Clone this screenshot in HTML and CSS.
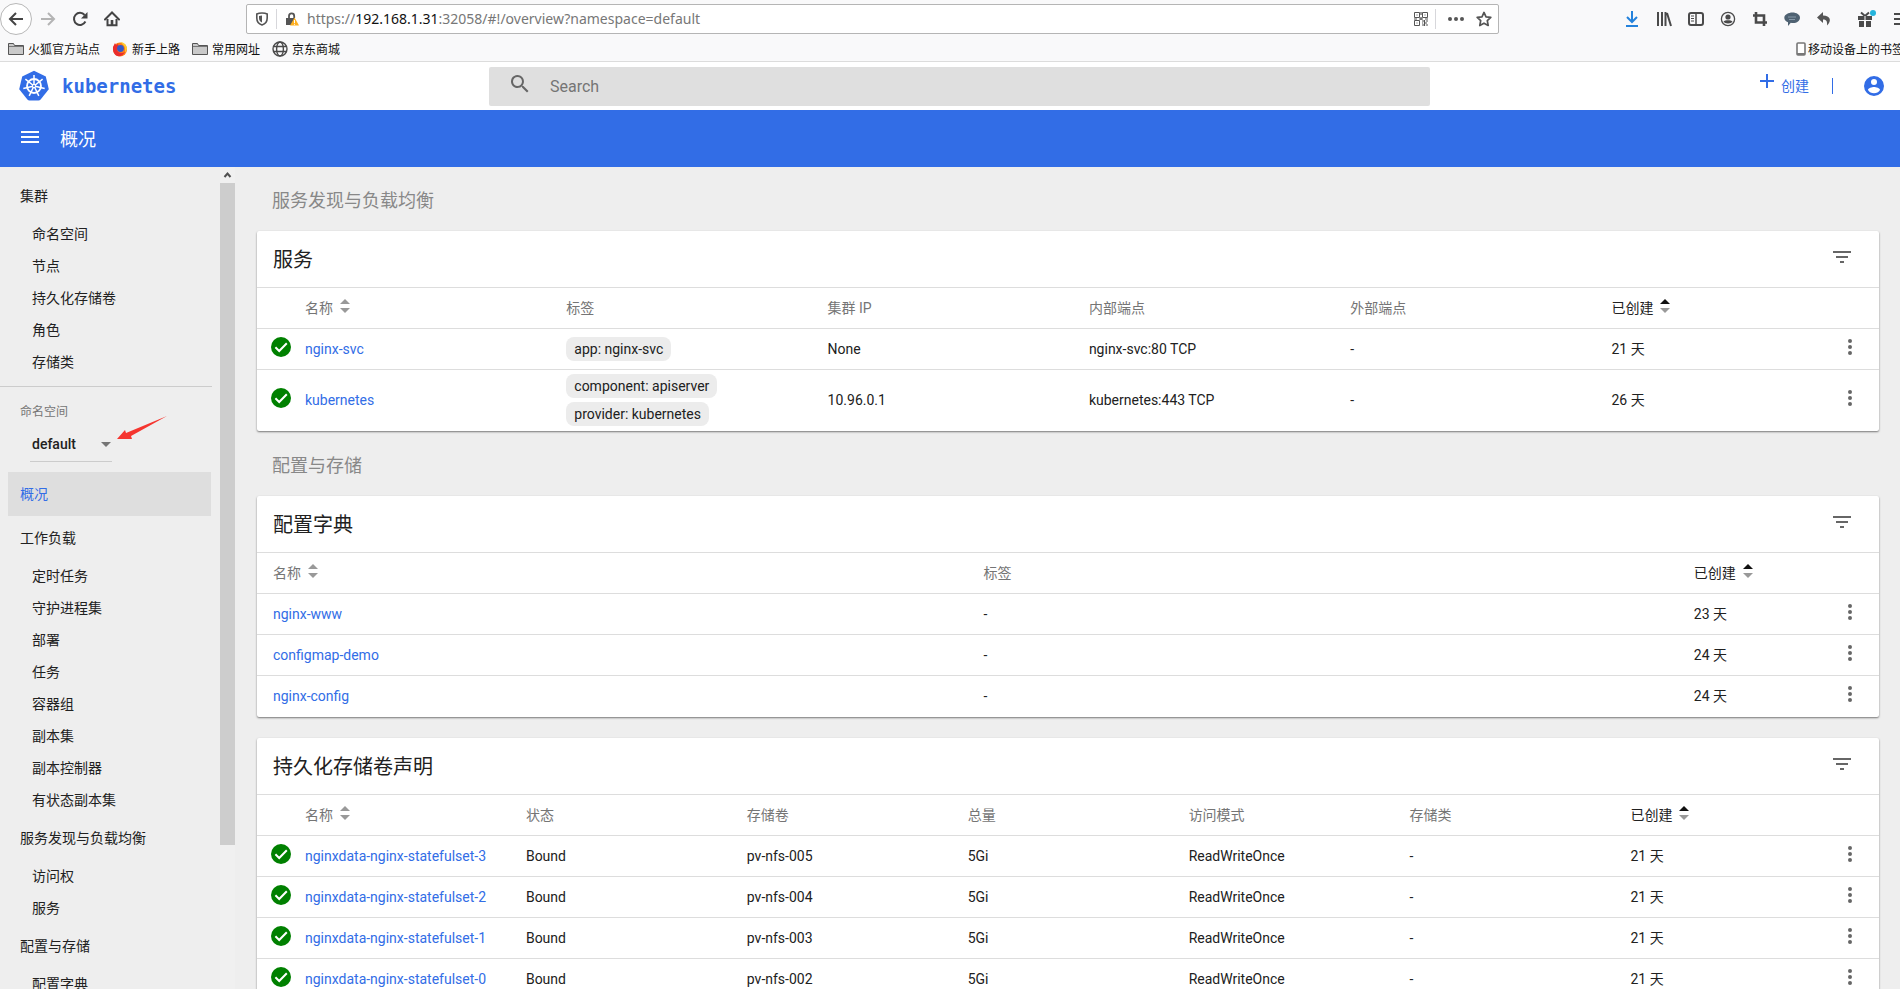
FILE: index.html
```
<!DOCTYPE html>
<html lang="zh-CN">
<head>
<meta charset="utf-8">
<title>概况 - Kubernetes Dashboard</title>
<link rel="stylesheet" href="styles.css">
</head>
<body>
<svg class="defs" aria-hidden="true">
  <symbol id="folder" viewBox="0 0 16 16"><path d="M.5 2.5h5l1 2h9v9H.5z" fill="#c9c9c9" stroke="#555"/><path d="M1 5.5h14" stroke="#777"/></symbol>
  <symbol id="check" viewBox="0 0 24 24"><circle cx="12" cy="12" r="10" fill="#008000"/><path d="M6.4 12.2l3.8 3.8 7.6-7.8" fill="none" stroke="#fff" stroke-width="2"/></symbol>
  <symbol id="more" viewBox="0 0 24 24"><path d="M12 8a2 2 0 1 0 0-4 2 2 0 0 0 0 4zm0 2a2 2 0 1 0 0 4 2 2 0 0 0 0-4zm0 6a2 2 0 1 0 0 4 2 2 0 0 0 0-4z"/></symbol>
  <symbol id="filter" viewBox="0 0 24 24"><path d="M10 18h4v-2h-4zM3 6v2h18V6zm3 7h12v-2H6z"/></symbol>
  <symbol id="sort" viewBox="0 0 10 14"><path d="M0 5l5-5 5 5z" fill="currentColor"/><path d="M0 9h10l-5 5z" fill="#999"/></symbol>
</svg>

<div class="browser">
  <div class="toolbar">
    <button class="tool back" aria-label="后退"><svg width="16" height="16" viewBox="0 0 16 16"><path d="M15 8H2M8 2L2 8l6 6" fill="none" stroke="#444" stroke-width="2"/></svg></button>
    <button class="tool" aria-label="前进"><svg width="16" height="16" viewBox="0 0 16 16"><path d="M1 8h13M8 2l6 6-6 6" fill="none" stroke="#b4b4b4" stroke-width="2"/></svg></button>
    <button class="tool" aria-label="刷新"><svg width="16" height="16" viewBox="0 0 16 16"><path d="M13.4 10.5A6 6 0 1 1 12.6 4" fill="none" stroke="#444" stroke-width="2"/><path d="M15.5 1v6.5H9z" fill="#444"/></svg></button>
    <button class="tool" aria-label="主页"><svg width="16" height="16" viewBox="0 0 16 16"><path d="M1 8.5l7-7 7 7" fill="none" stroke="#444" stroke-width="2" stroke-linecap="round"/><path d="M3.5 8v6.2h9V8" fill="none" stroke="#444" stroke-width="2"/><path d="M6.7 9h2.6v5H6.7z" fill="#444"/></svg></button>
    <div class="address">
      <svg width="14" height="14" viewBox="0 0 14 14"><path d="M7 1c2 0 4 .4 5.2 1v4c0 3.600-2 6-5.200 7C3.800 12 1.800 9.600 1.800 6V2C3 1.400 5 1 7 1z" fill="none" stroke="#555" stroke-width="1.600"/><path d="M7 3.500v7C5 9.500 4 8 4 6V4z" fill="#555"/></svg>
      <i class="rule"></i>
      <svg width="14" height="14" viewBox="0 0 14 14"><path d="M4 6V4a2.600 2.600 0 0 1 5.200 0v2" fill="none" stroke="#555" stroke-width="1.800"/><path d="M1 6h9v7H1z" fill="#555"/><path d="M9.500 5.500L14 13.500H5z" fill="#ffb020"/><path d="M9.500 8v3m0 .8v1" stroke="#fff"/></svg>
      <div class="url">https://<b>192.168.1.31</b>:32058/#!/overview?namespace=default</div>
      <svg width="14" height="14" viewBox="0 0 14 14" fill="none" stroke="#555"><path d="M.5.5h5v5h-5zM8.500.5h5v5h-5zM.5 8.500h5v5h-5z"/><path d="M2.500 3h1m7 0h1m-9 8h1M7 0v3m0 2v3M0 7h3m2 0h4m2 0h3M8 9h2m2 0h2M8 11h1m2 0h2m-5 2h2m2 0h2M10.500 8v6" stroke-width="1.200"/></svg>
      <i class="rule wide"></i>
      <svg class="dots" width="18" height="14" viewBox="0 0 18 14" fill="#555"><circle cx="3" cy="7" r="2"/><circle cx="9" cy="7" r="2"/><circle cx="15" cy="7" r="2"/></svg>
      <svg width="16" height="16" viewBox="0 0 16 16"><path d="M8 1.400l2 4.400 4.800.6-3.500 3.300.9 4.800L8 12.200l-4.200 2.300.9-4.800L1.200 6.400 6 5.800z" fill="none" stroke="#555" stroke-width="1.700" stroke-linejoin="round"/></svg>
    </div>
    <div class="actions">
      <svg width="16" height="16" viewBox="0 0 16 16" fill="none" stroke="#2482dc" stroke-width="2"><path d="M8 0v11M3 6l5 5 5-5M2 15h12"/></svg>
      <svg width="16" height="16" viewBox="0 0 16 16" fill="none" stroke="#4a4a4a" stroke-width="2"><path d="M2 1v14M6 1v14M9.500 1v14M11 2l4 13"/></svg>
      <svg width="16" height="16" viewBox="0 0 16 16" fill="none" stroke="#4a4a4a"><rect x="1" y="2" width="14" height="12" rx="2" stroke-width="2"/><path d="M8 2v12" stroke-width="1.500"/><path d="M3 5h3M3 7.500h3M3 10h3"/></svg>
      <svg width="16" height="16" viewBox="0 0 16 16"><circle cx="8" cy="8" r="6.600" fill="none" stroke="#4a4a4a" stroke-width="1.300"/><circle cx="8" cy="6" r="2.600" fill="#4a4a4a"/><path d="M3.500 10.500C5 8.800 11 8.800 12.500 10.500 11.500 13 4.500 13 3.500 10.500z" fill="#4a4a4a"/></svg>
      <svg width="16" height="16" viewBox="0 0 16 16" fill="none" stroke="#4a4a4a" stroke-width="2.600"><path d="M4 1v10.500h11M1 4.500h11V15"/></svg>
      <svg width="16" height="16" viewBox="0 0 16 16"><path d="M8.500 1.500c4 0 7.500 2.200 7.500 5.200s-3 5.300-7 5.300c-.8 0-1.500 0-2.200-.2L4 15v-3.800C1.800 10.300.3 8.800.3 6.700c0-3 4.200-5.200 8.200-5.200z" fill="#4f6272"/><path d="M4 6h8M5 8.500h6" stroke="#8799a8"/></svg>
      <svg width="16" height="16" viewBox="0 0 16 16"><path d="M7 1L1 6.500 7 12V8.500c3 0 4.500 1.500 4 6C16 10 14.500 4.500 7 4.500z" fill="#555"/></svg>
      <i class="rule tall"></i>
      <svg width="20" height="18" viewBox="0 0 20 18"><path d="M1 6h14v4H1zM2 11h5v6H2zM9 11h5v6H9z" fill="#4a4a4a"/><path d="M8 6L4 2.500M8 6l4-3.500" stroke="#4a4a4a" stroke-width="2"/><path d="M8 6v11" stroke="#f9f9fa"/><circle cx="16" cy="3" r="3" fill="#25b4dc"/></svg>
      <svg width="16" height="16" viewBox="0 0 16 16"><path d="M1 3h14M1 8h14M1 13h14" stroke="#4a4a4a" stroke-width="2"/></svg>
    </div>
  </div>
  <div class="bookmarks">
    <a href="#"><svg width="16" height="16"><use href="#folder"/></svg>火狐官方站点</a>
    <a href="#"><svg width="16" height="16" viewBox="0 0 16 16"><circle cx="8" cy="8.500" r="7" fill="#ff7a18"/><path d="M8 1c4 0 7 3 7 7l-2 4V7C12 4 10 3 8 1z" fill="#ffcb2e"/><path d="M1 6l2-4 1 2 2-1 1 4-2 2c1 3 5 4 8 2-2 4-6 5-9 3.500C2 13 .5 10 1 6z" fill="#ea2d2d"/><circle cx="8.500" cy="7.500" r="3.400" fill="#3359c8"/></svg>新手上路</a>
    <a href="#"><svg width="16" height="16"><use href="#folder"/></svg>常用网址</a>
    <a href="#"><svg width="16" height="16" viewBox="0 0 16 16" fill="none" stroke="#4a4a4a" stroke-width="1.400"><circle cx="8" cy="8" r="7"/><ellipse cx="8" cy="8" rx="3.400" ry="7"/><path d="M1.500 5.500h13M1.500 10.500h13"/></svg>京东商城</a>
    <a class="mobile" href="#"><svg width="10" height="14" viewBox="0 0 10 14"><rect x="1" y="1" width="8" height="12" rx="1" fill="#fff" stroke="#777" stroke-width="1.600"/><path d="M1 12h8" stroke="#777" stroke-width="2"/></svg>移动设备上的书签</a>
  </div>
</div>

<header class="header">
  <a class="brand" href="#">
    <svg width="32" height="32" viewBox="0 0 32 32"><path d="M16 .8l11.800 5.700 3 12.800-8.200 10.200a3 3 0 0 1-2 1h-9.200a3 3 0 0 1-2-1L1.200 19.300l3-12.800z" fill="#326de6"/><g fill="none" stroke="#fff"><circle cx="16" cy="16" r="7" stroke-width="1.800"/><path d="M16 16V5M16 16l8.600-6.900M16 16l10.700 2.500M16 16l4.800 9.900M16 16l-4.800 9.900M16 16L5.300 18.500M16 16L7.400 9.100" stroke-width="1.500"/></g><circle cx="16" cy="16" r="2" fill="#fff"/><circle cx="16" cy="16" r="1" fill="#326de6"/></svg>
    <span>kubernetes</span>
  </a>
  <label class="search">
    <svg width="24" height="24" viewBox="0 0 24 24"><path d="M15.500 14h-.8l-.3-.3A6.500 6.500 0 1 0 13.700 14.400l.3.300v.8l5 5 1.500-1.500zm-6 0a4.500 4.500 0 1 1 0-9 4.500 4.500 0 0 1 0 9z" fill="#666"/></svg>
    <input type="search" placeholder="Search" aria-label="Search">
  </label>
  <div class="user">
    <button class="create"><svg width="14" height="14" viewBox="0 0 14 14"><path d="M7 0v14M0 7h14" stroke="#326de6" stroke-width="2"/></svg><span>创建</span></button>
    <i class="bar"></i>
    <button class="account" aria-label="账户"><svg width="24" height="24" viewBox="0 0 24 24"><path d="M12 2a10 10 0 1 0 0 20 10 10 0 0 0 0-20zm0 3a3 3 0 1 1 0 6 3 3 0 0 1 0-6zm0 14.200a7.200 7.200 0 0 1-6-3.220c.03-1.990 4-3.080 6-3.080s5.970 1.090 6 3.080a7.200 7.200 0 0 1-6 3.220z" fill="#326de6"/></svg></button>
  </div>
</header>

<div class="actionbar">
  <button aria-label="菜单"><svg width="24" height="24" viewBox="0 0 24 24"><path d="M3 18h18v-2H3zm0-5h18v-2H3zm0-7v2h18V6z" fill="#fff"/></svg></button>
  <h1>概况</h1>
</div>

<div class="body">
  <nav class="nav">
    <a class="group" href="#">集群</a>
    <a href="#">命名空间</a>
    <a href="#">节点</a>
    <a href="#">持久化存储卷</a>
    <a href="#">角色</a>
    <a href="#">存储类</a>
    <div class="namespace">
      <label for="ns">命名空间</label>
      <div class="picker">
        <select id="ns"><option>default</option></select>
        <svg class="caret" width="10" height="5" viewBox="0 0 10 5"><path d="M0 0h10L5 5z" fill="#757575"/></svg>
        <svg class="pointer" width="50" height="25" viewBox="0 0 50 25"><path d="M0 23l8-9 1 3L50 0 14 20l1 3z" fill="#f5352f"/></svg>
      </div>
    </div>
    <a class="group active" href="#">概况</a>
    <a class="group" href="#">工作负载</a>
    <a href="#">定时任务</a>
    <a href="#">守护进程集</a>
    <a href="#">部署</a>
    <a href="#">任务</a>
    <a href="#">容器组</a>
    <a href="#">副本集</a>
    <a href="#">副本控制器</a>
    <a href="#">有状态副本集</a>
    <a class="group" href="#">服务发现与负载均衡</a>
    <a href="#">访问权</a>
    <a href="#">服务</a>
    <a class="group" href="#">配置与存储</a>
    <a href="#">配置字典</a>
  </nav>
  <div class="scrollbar">
    <svg width="15" height="16" viewBox="0 0 15 16"><path d="M4.500 10l3-3.500 3 3.500" fill="none" stroke="#505050" stroke-width="2"/></svg>
    <div class="thumb"></div>
  </div>

  <main class="main">
    <h2>服务发现与负载均衡</h2>
    <section class="card">
      <div class="card-head"><h3>服务</h3><button aria-label="筛选"><svg width="24" height="24"><use href="#filter"/></svg></button></div>
      <table class="services">
        <thead><tr><th class="status"></th><th class="col">名称<svg class="sort" width="10" height="14"><use href="#sort"/></svg></th><th class="col">标签</th><th class="col">集群 IP</th><th class="col">内部端点</th><th class="col">外部端点</th><th class="sorted">已创建<svg class="sort" width="10" height="14"><use href="#sort"/></svg></th><th class="menu"></th></tr></thead>
        <tbody>
          <tr><td class="status"><svg width="24" height="24"><use href="#check"/></svg></td><td><a href="#">nginx-svc</a></td><td><div class="chips"><span>app: nginx-svc</span></div></td><td>None</td><td>nginx-svc:80 TCP</td><td>-</td><td>21 天</td><td class="menu"><button aria-label="操作"><svg width="24" height="24"><use href="#more"/></svg></button></td></tr>
          <tr><td class="status"><svg width="24" height="24"><use href="#check"/></svg></td><td><a href="#">kubernetes</a></td><td><div class="chips"><span>component: apiserver</span><span>provider: kubernetes</span></div></td><td>10.96.0.1</td><td>kubernetes:443 TCP</td><td>-</td><td>26 天</td><td class="menu"><button aria-label="操作"><svg width="24" height="24"><use href="#more"/></svg></button></td></tr>
        </tbody>
      </table>
    </section>

    <h2>配置与存储</h2>
    <section class="card">
      <div class="card-head"><h3>配置字典</h3><button aria-label="筛选"><svg width="24" height="24"><use href="#filter"/></svg></button></div>
      <table class="configs">
        <thead><tr><th class="edge"></th><th class="col">名称<svg class="sort" width="10" height="14"><use href="#sort"/></svg></th><th class="col">标签</th><th class="sorted">已创建<svg class="sort" width="10" height="14"><use href="#sort"/></svg></th><th class="menu"></th></tr></thead>
        <tbody>
          <tr><td></td><td><a href="#">nginx-www</a></td><td>-</td><td>23 天</td><td class="menu"><button aria-label="操作"><svg width="24" height="24"><use href="#more"/></svg></button></td></tr>
          <tr><td></td><td><a href="#">configmap-demo</a></td><td>-</td><td>24 天</td><td class="menu"><button aria-label="操作"><svg width="24" height="24"><use href="#more"/></svg></button></td></tr>
          <tr><td></td><td><a href="#">nginx-config</a></td><td>-</td><td>24 天</td><td class="menu"><button aria-label="操作"><svg width="24" height="24"><use href="#more"/></svg></button></td></tr>
        </tbody>
      </table>
    </section>

    <section class="card">
      <div class="card-head"><h3>持久化存储卷声明</h3><button aria-label="筛选"><svg width="24" height="24"><use href="#filter"/></svg></button></div>
      <table class="claims">
        <thead><tr><th class="status"></th><th class="col">名称<svg class="sort" width="10" height="14"><use href="#sort"/></svg></th><th class="col">状态</th><th class="col">存储卷</th><th class="col">总量</th><th class="col">访问模式</th><th class="col">存储类</th><th class="sorted">已创建<svg class="sort" width="10" height="14"><use href="#sort"/></svg></th><th class="menu"></th></tr></thead>
        <tbody>
          <tr><td class="status"><svg width="24" height="24"><use href="#check"/></svg></td><td><a href="#">nginxdata-nginx-statefulset-3</a></td><td>Bound</td><td>pv-nfs-005</td><td>5Gi</td><td>ReadWriteOnce</td><td>-</td><td>21 天</td><td class="menu"><button aria-label="操作"><svg width="24" height="24"><use href="#more"/></svg></button></td></tr>
          <tr><td class="status"><svg width="24" height="24"><use href="#check"/></svg></td><td><a href="#">nginxdata-nginx-statefulset-2</a></td><td>Bound</td><td>pv-nfs-004</td><td>5Gi</td><td>ReadWriteOnce</td><td>-</td><td>21 天</td><td class="menu"><button aria-label="操作"><svg width="24" height="24"><use href="#more"/></svg></button></td></tr>
          <tr><td class="status"><svg width="24" height="24"><use href="#check"/></svg></td><td><a href="#">nginxdata-nginx-statefulset-1</a></td><td>Bound</td><td>pv-nfs-003</td><td>5Gi</td><td>ReadWriteOnce</td><td>-</td><td>21 天</td><td class="menu"><button aria-label="操作"><svg width="24" height="24"><use href="#more"/></svg></button></td></tr>
          <tr><td class="status"><svg width="24" height="24"><use href="#check"/></svg></td><td><a href="#">nginxdata-nginx-statefulset-0</a></td><td>Bound</td><td>pv-nfs-002</td><td>5Gi</td><td>ReadWriteOnce</td><td>-</td><td>21 天</td><td class="menu"><button aria-label="操作"><svg width="24" height="24"><use href="#more"/></svg></button></td></tr>
        </tbody>
      </table>
    </section>
  </main>
</div>
</body>
</html>
```
FILE: styles.css
```
* { box-sizing: border-box; }

body {
  margin: 0;
  height: 100vh;
  display: flex;
  flex-direction: column;
  overflow: hidden;
  background: #eee;
  color: #212121;
  font: 14px/20px Roboto, "Noto Sans CJK SC", sans-serif;
}

a { color: inherit; text-decoration: none; }
button { display: block; padding: 0; border: 0; background: none; font: inherit; color: inherit; cursor: pointer; }
svg { display: block; flex: none; }
h1, h2, h3 { margin: 0; font-weight: 400; }
.defs { position: absolute; width: 0; height: 0; }

/* Browser window */
.browser {
  flex: none;
  overflow: hidden;
  background: #f9f9fa;
  border-bottom: 1px solid #dcdcdc;
}
.toolbar { display: flex; align-items: center; height: 38px; }
.tool { display: grid; place-items: center; width: 32px; height: 32px; }
.back { border: 1px solid #b8b8b8; border-radius: 50%; background: #fff; }
.rule { width: 1px; height: 20px; background: #d7d7db; }
.address {
  flex: 1;
  display: flex;
  align-items: center;
  height: 30px;
  margin-left: 118px;
  padding: 0 6px 0 8px;
  background: #fff;
  border: 1px solid #b5b5b5;
  border-radius: 2px;
}
.address .rule { margin: 0 8px 0 7px; }
.address .wide { margin: 0 11px 0 7px; }
.dots { margin-right: 11px; }
.url {
  flex: 1;
  margin-left: 8px;
  color: #777;
  font: 14px/20px "Noto Sans", sans-serif;
}
.url b { font-weight: 400; color: #111; }
.actions {
  display: flex;
  align-items: center;
  gap: 16px;
  width: 401px;
  padding-left: 125px;
}
.actions .tall { height: 32px; margin: 0 -2px 0 -5px; }
.bookmarks {
  display: flex;
  align-items: center;
  gap: 12px;
  height: 23px;
  padding: 0 0 2px 8px;
  color: #111;
  font: 12px/16px "Noto Sans CJK SC", sans-serif;
  white-space: nowrap;
}
.bookmarks a { display: flex; align-items: center; gap: 4px; }
.bookmarks .mobile { gap: 2px; margin-left: auto; margin-right: -4px; }

/* Application header */
.header {
  flex: none;
  display: grid;
  grid-template-columns: 489px 1fr 470px;
  align-items: center;
  height: 48px;
  background: #fff;
}
.brand {
  display: flex;
  align-items: center;
  gap: 12px;
  padding-left: 18px;
  color: #326de6;
  font: bold 19px/24px "DejaVu Sans Mono", monospace;
}
.search {
  display: flex;
  align-items: center;
  gap: 18px;
  height: 39px;
  padding-left: 19px;
  background: #dfdfdf;
  border-radius: 2px;
}
.search svg { margin-bottom: 5px; }
.search input { flex: 1; border: 0; padding: 2px 0 0; outline: 0; background: none; font: 16px/24px Roboto, sans-serif; }
.search input::placeholder { color: #757575; }
.user {
  display: flex;
  align-items: center;
  justify-content: flex-end;
  padding-right: 14px;
  color: #326de6;
}
.create { display: flex; align-items: center; gap: 7px; }
.create svg { margin-bottom: 10px; }
.bar { width: 1px; height: 16px; margin: 0 29px 0 23px; background: #326de6; }

.actionbar {
  flex: none;
  display: flex;
  align-items: center;
  gap: 18px;
  height: 57px;
  padding-left: 18px;
  background: #326de6;
  color: #fff;
}
.actionbar button { margin-bottom: 4px; }
.actionbar h1 { padding-top: 2px; font-size: 18px; line-height: 24px; }

/* Sidebar */
.body { flex: 1; display: flex; min-height: 0; }
.nav { flex: none; width: 212px; padding-top: 7px; overflow: hidden; }
.nav a { display: block; padding-left: 32px; line-height: 32px; }
.nav .group { padding-left: 20px; line-height: 44px; }
.nav .active { margin: 0 1px 0 8px; padding-left: 12px; background: #dedede; color: #326de6; }
.namespace { margin-top: 8px; padding: 15px 0 10px 20px; border-top: 1px solid #ccc; }
.namespace label { display: block; color: #757575; font-size: 12px; }
.picker { position: relative; width: 82px; margin: 7px 0 0 10px; }
.picker select {
  appearance: none;
  display: block;
  width: 100%;
  height: 33px;
  padding: 0 0 2px 2px;
  border: 0;
  border-bottom: 1px solid #ccc;
  background: none;
  color: #212121;
  font: 500 14px/30px Roboto, sans-serif;
}
.caret { position: absolute; right: 1px; top: 13px; }
.pointer { position: absolute; left: 87px; top: -13px; }
.scrollbar { flex: none; width: 15px; margin-left: 8px; background: #f0f0f0; }
.thumb { height: 80.5%; background: #cdcdcd; }

/* Content */
.main { flex: 1; min-width: 0; padding: 0 21px 0 22px; overflow: hidden; }
.main h2 { padding: 22px 15px 18px; color: #888; font-size: 18px; line-height: 24px; }
.card {
  margin-bottom: 21px;
  background: #fff;
  border-radius: 2px;
  box-shadow: 0 1px 2px rgba(0, 0, 0, .5);
}
.card:has(+ h2) { margin-bottom: 1px; }
.card-head {
  display: flex;
  align-items: center;
  justify-content: space-between;
  height: 57px;
  padding: 0 25px 0 16px;
  border-bottom: 1px solid #ddd;
}
.card-head h3 { padding-top: 2px; font-size: 20px; line-height: 28px; }
.card-head button { margin-bottom: 4px; }
.card-head svg, .menu svg { fill: #666; }

table { width: 100%; table-layout: fixed; border-collapse: separate; border-spacing: 0; }
th, td { height: 41px; padding: 0; border-bottom: 1px solid #ddd; text-align: left; white-space: nowrap; }
tbody tr:last-child td { border-bottom-color: transparent; }
th { color: #757575; font-weight: 400; }
.sorted { color: #212121; }
td a { color: #326de6; }
.status { width: 48px; padding: 0 0 4px 12px; }
.edge { width: 16px; }
.menu { width: 41px; padding: 0 0 4px; }
.services .col { width: 16.11%; }
.configs .col { width: 43.8%; }
.claims .col { width: 13.62%; }
.sort { display: inline-block; margin-left: 7px; color: #999; }
.sorted .sort { color: #111; }
.chips { display: flex; flex-direction: column; align-items: flex-start; gap: 4px; padding: 4px 0; }
.chips span { padding: 0 8px; background: #ececec; border-radius: 8px; line-height: 24px; }
```
